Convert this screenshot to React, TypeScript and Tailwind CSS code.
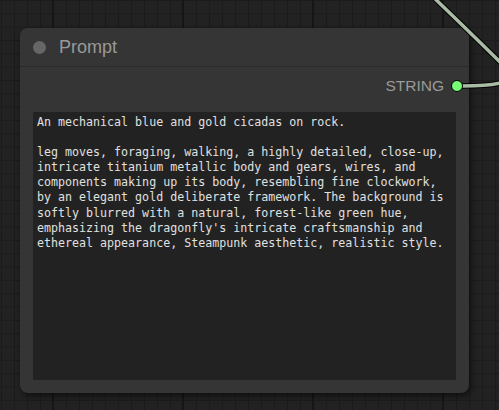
export default function App() {
  const lines = [
    "An mechanical blue and gold cicadas on rock.",
    "",
    "leg moves, foraging, walking, a highly detailed, close-up,",
    "intricate titanium metallic body and gears, wires, and",
    "components making up its body, resembling fine clockwork,",
    "by an elegant gold deliberate framework. The background is",
    "softly blurred with a natural, forest-like green hue,",
    "emphasizing the dragonfly's intricate craftsmanship and",
    "ethereal appearance, Steampunk aesthetic, realistic style.",
  ];
  return (
    <div className="relative w-[499px] h-[410px] overflow-hidden bg-[#222222] bg-[linear-gradient(to_right,#161616_2px,transparent_2px),linear-gradient(to_right,#1b1b1b_1px,transparent_1px),linear-gradient(to_bottom,#1b1b1b_1px,transparent_1px)] [background-size:130px_100%,13px_100%,100%_13.33px] [background-position:52px_0,1px_0,0_0]">
      <div className="absolute left-[20px] top-[28px] w-[449px] h-[365px] rounded-[8px] bg-[#353535] shadow-[2px_3px_6px_rgba(0,0,0,0.55)] flex flex-col">
        <div className="h-[39px] flex items-center gap-[13px] pl-[13px] border-b border-[#2b2b2b]">
          <div className="w-[13px] h-[13px] rounded-full bg-[#666666]" />
          <span className="text-[18px] text-[#999999] font-['Liberation_Sans',Arial,sans-serif] leading-none">
            Prompt
          </span>
        </div>
        <div className="mt-[9px] h-[20px] flex items-center justify-end gap-[7px] pr-[6px]">
          <span className="text-[15.5px] text-[#9a9a9a] font-['Liberation_Sans',Arial,sans-serif] leading-none">
            STRING
          </span>
          <div className="relative z-20 w-[12px] h-[12px] rounded-full bg-[#77ff77] border border-black" />
        </div>
        <div className="mt-[16px] mx-[13px] mb-[13px] flex-1 bg-[#222222] pt-[3px] pl-[4px] font-['DejaVu_Sans_Mono','Liberation_Mono',monospace] text-[11.65px] leading-[15.1px] text-[#e0e0e0]">
          {lines.map((l, i) => (
            <div key={i} className="whitespace-pre h-[15.1px]">
              {l}
            </div>
          ))}
        </div>
      </div>
      <svg className="absolute inset-0 pointer-events-none" width="499" height="410">
        <path
          d="M 462 86 C 498 86, 520 82, 506 68 C 490 52, 455 18, 428 -8"
          fill="none"
          stroke="#000000"
          strokeWidth="5.5"
        />
        <path
          d="M 462 86 C 498 86, 520 82, 506 68 C 490 52, 455 18, 428 -8"
          fill="none"
          stroke="#aabba5"
          strokeWidth="3.5"
        />
      </svg>
    </div>
  );
}
